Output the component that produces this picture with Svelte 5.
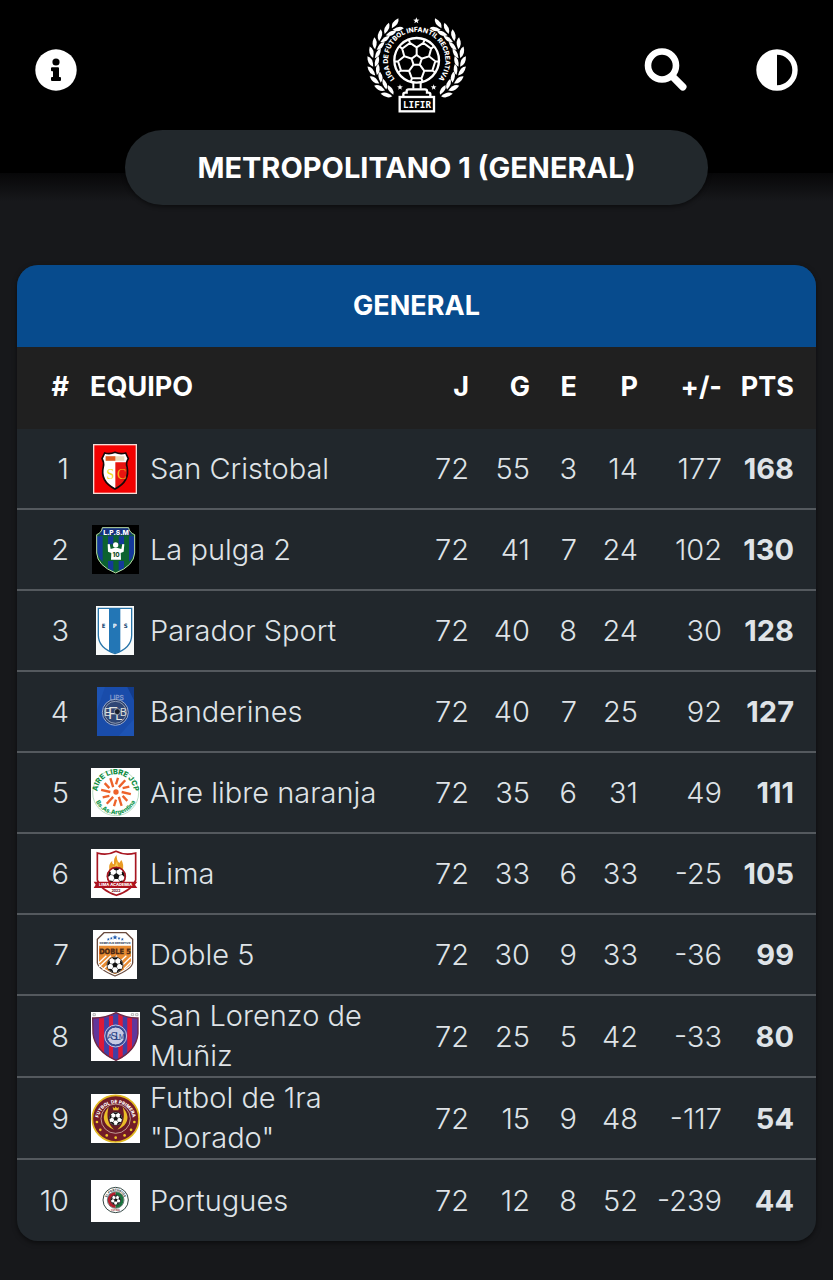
<script>
  const teams = [
    { id: 'cristobal', name: 'San Cristobal', w: 44, h: 50, s: [72, 55, 3, 14, 177, 168] },
    { id: 'pulga', name: 'La pulga 2', w: 47, h: 49, s: [72, 41, 7, 24, 102, 130] },
    { id: 'parador', name: 'Parador Sport', w: 38, h: 49, s: [72, 40, 8, 24, 30, 128] },
    { id: 'banderines', name: 'Banderines', w: 37, h: 49, s: [72, 40, 7, 25, 92, 127] },
    { id: 'aire', name: 'Aire libre naranja', w: 49, h: 49, s: [72, 35, 6, 31, 49, 111] },
    { id: 'lima', name: 'Lima', w: 49, h: 49, s: [72, 33, 6, 33, -25, 105] },
    { id: 'doble', name: 'Doble 5', w: 44, h: 49, s: [72, 30, 9, 33, -36, 99] },
    { id: 'lorenzo', name: 'San Lorenzo de Muñiz', w: 49, h: 49, s: [72, 25, 5, 42, -33, 80] },
    { id: 'dorado', name: 'Futbol de 1ra "Dorado"', w: 49, h: 49, s: [72, 15, 9, 48, -117, 54] },
    { id: 'portugues', name: 'Portugues', w: 49, h: 42, s: [72, 12, 8, 52, -239, 44] }
  ];

  const polar = (cx, cy, r, deg) => {
    const a = (deg * Math.PI) / 180;
    return `${(cx + r * Math.cos(a)).toFixed(1)},${(cy + r * Math.sin(a)).toFixed(1)}`;
  };
  const five = [0, 1, 2, 3, 4];
  const star = (cx, cy, r) =>
    Array.from({ length: 10 }, (_, i) => polar(cx, cy, i % 2 ? r * 0.42 : r, -90 + i * 36)).join(' ');
  const pentagon = (cx, cy, r) => five.map((i) => polar(cx, cy, r, -90 + i * 72)).join(' ');
  const patch = (cx, cy, r, a) =>
    [polar(cx, cy, r, a - 22), polar(cx, cy, r * 0.78, a - 18), polar(cx, cy, r * 0.66, a), polar(cx, cy, r * 0.78, a + 18), polar(cx, cy, r, a + 22)].join(' ');

  // Seams of the trophy ball: each spoke ends in a fork that reaches the rim.
  const seams = five
    .map((i) => {
      const a = -90 + i * 72;
      const p = (r, d) => polar(200, 181, r, a + d);
      return `M${p(15, 0)} L${p(39, 0)} L${p(56, 21)} L${p(56, 51)} L${p(39, 72)} M${p(56, 21)} L${p(66, 21)} M${p(56, 51)} L${p(66, 51)}`;
    })
    .join(' ');

  const leaves = Array.from({ length: 10 }, (_, i) => {
    const a = 126 + i * 12.4;
    const rad = (a * Math.PI) / 180;
    return {
      x: 200 + 129 * Math.cos(rad),
      y: 186 + 121 * Math.sin(rad),
      a: a + 92
    };
  });
  const rays = Array.from({ length: 12 }, (_, i) => i * 30);
</script>

{#snippet ball(cx, cy, r)}
  <circle {cx} {cy} {r} fill="#fff" stroke="#111" stroke-width="2" />
  <polygon points={pentagon(cx, cy, r * 0.36)} fill="#111" />
  {#each five as i}
    <polygon points={patch(cx, cy, r, -90 + i * 72)} fill="#111" />
    <path d={`M${polar(cx, cy, r * 0.3, -90 + i * 72)} L${polar(cx, cy, r * 0.7, -90 + i * 72)}`} stroke="#111" stroke-width="1.5" />
  {/each}
{/snippet}

{#snippet crest(t)}
  <svg class="crest" width={t.w} height={t.h} viewBox={`0 0 ${t.w * 3} ${t.h * 3}`} aria-hidden="true">
    {#if t.id === 'cristobal'}
      <rect width="132" height="150" fill="#f6dcd6" />
      <rect x="4" y="4" width="124" height="142" fill="#f40000" />
      <path d="M35 27 Q50 32 66 25 Q82 32 98 27 L106 44 Q98 55 102 68 Q112 112 66 135 Q20 112 31 68 Q34 55 27 44Z" fill="#fff" />
      <path d="M67 26 V134 Q112 112 101 68 V55 H67Z" fill="#e81410" />
      <path d="M38 37 H94 V50 H38Z" fill="#e9d9b8" />
      <path d="M38 37 H67 V50 H38Z" fill="#e0571f" />
      <path d="M35 27 Q50 32 66 25 Q82 32 98 27 L106 44 Q98 55 102 68 Q112 112 66 135 Q20 112 31 68 Q34 55 27 44Z" fill="none" stroke="#180808" stroke-width="5" />
      <text x="52" y="105" font-size="42" class="serif" fill="#f2dc22">S</text>
      <text x="86" y="105" font-size="42" class="serif" fill="#f6b51c">C</text>
    {:else if t.id === 'pulga'}
      <rect width="141" height="147" fill="#000" />
      <path d="M31 8 H110 Q112 23 128 29 V84 Q126 122 71 144 Q16 122 14 84 V29 Q29 23 31 8Z" fill="#0c6230" />
      <path d="M15 34 H32 V110 Q15 96 15 70Z M48 34 H64 V58 H48Z M80 34 H96 V58 H80Z M111 34 H127 V78 Q125 98 111 110Z M48 108 H64 V139 L48 130Z M80 108 H96 V130 L80 138Z" fill="#14389a" />
      <path d="M31 8 H110 Q112 23 124 31 H18 Q29 23 31 8Z" fill="#14307e" />
      <path d="M31 8 H110 Q112 23 128 29 V84 Q126 122 71 144 Q16 122 14 84 V29 Q29 23 31 8Z" fill="none" stroke="#b9dca8" stroke-width="3" />
      <text x="72" y="29" font-size="20" class="bold" fill="#fff">L.P.S.M</text>
      <circle cx="71" cy="60" r="8" fill="#fff" />
      <path d="M47 58 L53 57 L56 72 L66 69 H77 L88 72 L91 57 L97 58 L95 80 L86 84 L87 104 H57 L58 84 L48 80Z" fill="#fff" />
      <text x="72" y="95" font-size="19" class="bold" fill="#174e28">10</text>
    {:else if t.id === 'parador'}
      <rect width="114" height="147" fill="#f8fafa" />
      <path d="M7 7 H107 V88 Q107 126 57 143 Q7 126 7 88Z" fill="#fff" stroke="#2875aa" stroke-width="4" />
      <path d="M39 7 H73 V137 L57 142 L39 136Z" fill="#2376b5" />
      <text x="23" y="65" font-size="18" class="condensed" fill="#184a74">E</text>
      <text x="56" y="65" font-size="18" class="condensed" fill="#fff">P</text>
      <text x="89" y="65" font-size="18" class="condensed" fill="#184a74">S</text>
    {:else if t.id === 'banderines'}
      <rect width="111" height="147" fill="#194caa" />
      <path d="M0 0 H24 L0 70Z M65 147 L111 96 V147Z" fill="#1d53b3" />
      <path d="M91 0 H111 V40Z" fill="#123c8c" />
      <text x="59" y="38" font-size="20" fill="none" stroke="#8198cb" stroke-width="1.5">LIPS</text>
      <circle cx="55" cy="76" r="39" fill="#293e69" stroke="#9aabcf" stroke-width="3" />
      <circle cx="55" cy="76" r="33" fill="#2f4674" stroke="#bec5d1" stroke-width="2" />
      <g class="condensed" fill="#e0e2df">
        <text x="32" y="87" font-size="30">E</text>
        <text x="48" y="95" font-size="48">F</text>
        <text x="66" y="100" font-size="40">L</text>
        <text x="79" y="87" font-size="30">B</text>
      </g>
      <circle cx="61" cy="74" r="9" fill="#1b1e29" stroke="#bec5d1" stroke-width="2" />
    {:else if t.id === 'aire'}
      <rect width="147" height="147" fill="#fff" />
      <circle cx="74" cy="74" r="69" fill="none" stroke="#9acda7" stroke-width="2" />
      <defs>
        <path id="aire-top" d="M20 84 A55 55 0 1 1 128 84" />
        <path id="aire-bottom" d="M9 84 A66 66 0 0 0 139 84" />
      </defs>
      <text font-size="22" class="bold" fill="#108d43"><textPath href="#aire-top" startOffset="50%">AIRE LIBRE JCP</textPath></text>
      <text font-size="18" class="bold" fill="#159950"><textPath href="#aire-bottom" startOffset="50%">Bs.As.Argentina</textPath></text>
      {#each rays as a, i}
        <path d={`M${polar(75, 72, i % 2 ? 23 : 17, a)} L${polar(75, 72, i % 2 ? 43 : 45, a + 8)}`} stroke="#ed622b" stroke-width="7" />
      {/each}
      <circle cx="75" cy="72" r="8" fill="#ed622b" />
    {:else if t.id === 'lima'}
      <rect width="147" height="147" fill="#fff" />
      <path d="M19 12 Q48 21 75 7 Q102 21 134 12 V93 Q126 122 76 139 Q27 122 19 93Z" fill="#fff" stroke="#a81621" stroke-width="5" />
      <path d="M55 65 Q52 43 64 35 Q62 45 69 46 Q67 27 77 18 Q76 33 85 42 L91 33 Q101 47 94 69Z" fill="#e99b24" />
      <path d="M64 65 Q60 50 70 53 L79 34 Q78 50 87 63Z" fill="#f8ce4d" />
      {@render ball(76, 82, 27)}
      <circle cx="76" cy="82" r="27" fill="none" stroke="#a81621" stroke-width="5" />
      <path d="M8 98 H139 L132 107 L139 117 H8 L14 107Z" fill="#ad121e" />
      <text x="74" y="112" font-size="12" class="bold" fill="#fff">LIMA ACADEMIA</text>
      <text x="75" y="128" font-size="10" class="bold" fill="#79212a">2022</text>
    {:else if t.id === 'doble'}
      <rect width="132" height="147" fill="#fff" />
      <path d="M33 8 H99 L119 28 V99 Q116 117 66 138 Q16 117 13 99 V28Z" fill="#fff" stroke="#694a3e" stroke-width="4" />
      <path d="M18 47 H114 V100 Q110 113 66 133 Q22 113 18 100Z" fill="#e78b32" />
      <path d="M18 98 L40 77 M18 111 L54 77 M29 119 L72 77 M78 98 L100 77 M86 108 L114 81 M93 117 L114 96" stroke="#fff" stroke-width="4" />
      {#each [[46, 28], [55, 25], [66, 22], [78, 25], [88, 28]] as p, i}
        <polygon points={star(p[0], p[1], i === 2 ? 8 : 5)} fill="#225caf" />
      {/each}
      <text x="66" y="43" font-size="8" class="bold" fill="#394761">COMPLEJO DEPORTIVO</text>
      <text x="66" y="71" font-size="22" class="condensed" fill="#4b2815" stroke="#4b2815" stroke-width="1">DOBLE 5</text>
      {@render ball(66, 105, 24)}
    {:else if t.id === 'lorenzo'}
      <rect width="147" height="147" fill="#fff" />
      <path d="M5 18 Q43 19 75 2 Q107 19 141 18 V65 Q136 117 75 145 Q12 117 6 65Z" fill="#61369b" />
      <path d="M24 19 H39 V124 L24 110Z M54 12 H66 V141 L54 135Z M82 7 L95 13 V137 L82 143Z M109 17 H123 V111 L109 124Z" fill="#db1a38" />
      <path d="M40 19 H53 V134 L40 125Z M67 7 H81 V143 L67 141Z M96 14 H108 V126 L96 135Z" fill="#4040a4" />
      <path d="M5 18 Q43 19 75 2 Q107 19 141 18 V65 Q136 117 75 145 Q12 117 6 65Z" fill="none" stroke="#6d2844" stroke-width="4" />
      <circle cx="74" cy="72" r="33" fill="#3c519a" stroke="#c1c5e4" stroke-width="3" />
      <circle cx="74" cy="72" r="27" fill="#c6cae3" stroke="#2e3f89" stroke-width="3" />
      <g class="condensed" fill="#243d83">
        <text x="57" y="81" font-size="22">A</text>
        <text x="69" y="84" font-size="32">S</text>
        <text x="81" y="84" font-size="30">L</text>
        <text x="92" y="80" font-size="20">M</text>
      </g>
      <path d="M6 5 H13 V11 H6Z M121 5 H128 V11 H121Z M134 5 H141 V11 H134Z" fill="none" stroke="#949494" stroke-width="2" />
    {:else if t.id === 'dorado'}
      <rect width="147" height="147" fill="#fff" />
      <circle cx="74" cy="74" r="70" fill="#731c27" stroke="#e1b91f" stroke-width="5" />
      <circle cx="74" cy="74" r="44" fill="#681b27" stroke="#eddbc7" stroke-width="2" />
      <defs><path id="dorado-arc" d="M22 80 A52 52 0 1 1 126 80" /></defs>
      <text font-size="14" class="bold" fill="#fff"><textPath href="#dorado-arc" startOffset="50%">FUTBOL DE PRIMERA</textPath></text>
      <path d="M53 39 Q27 69 48 94 Q57 103 69 107 Q41 82 53 39Z M95 39 Q121 69 100 94 Q91 103 79 107 Q107 82 95 39Z" fill="#e9bc28" />
      <path d="M67 49 L65 39 L71 43 L74 37 L78 43 L84 39 L82 49Z" fill="#e9bc28" />
      {@render ball(74, 74, 20)}
      {#each [10, 36, 62, 90, 118, 144, 170] as a}
        <circle cx={74 + 57 * Math.cos((a * Math.PI) / 180)} cy={74 + 57 * Math.sin((a * Math.PI) / 180)} r="4" fill="#edc728" />
      {/each}
    {:else}
      <rect width="147" height="126" fill="#fff" />
      <circle cx="74" cy="60" r="38" fill="#fff" stroke="#344844" stroke-width="3" />
      <path d="M74 36 A24 24 0 0 0 74 84Z" fill="#b51e2c" />
      <path d="M74 36 A24 24 0 0 1 74 84Z" fill="#19743d" />
      <circle cx="74" cy="60" r="25" fill="none" stroke="#354b44" stroke-width="2" />
      <defs><path id="port-arc" d="M47 60 A27 27 0 0 1 101 60" /></defs>
      <text font-size="9" class="bold" fill="#35433f"><textPath href="#port-arc" startOffset="50%">EL PORTUGUES</textPath></text>
      <text x="74" y="94" font-size="7" class="bold" fill="#9e3942">FUTBOL</text>
      {@render ball(74, 60, 15)}
    {/if}
  </svg>
{/snippet}

<div class="page">
  <header>
    <nav>
      <div class="side">
        <button aria-label="Información">
          <svg width="42" height="42" viewBox="0 0 42 42">
            <circle cx="21" cy="21" r="20.7" fill="#fff" />
            <circle cx="21" cy="13" r="3.6" fill="#000" />
            <path d="M17 18.3 H23 Q24 18.3 24 19.3 V28 H25 Q26 28 26 29 V31 Q26 32 25 32 H17 Q16 32 16 31 V29 Q16 28 17 28 H18 V22.3 H17 Q16 22.3 16 21.3 V19.3 Q16 18.3 17 18.3Z" fill="#000" />
          </svg>
        </button>
      </div>
      <a href="#inicio" aria-label="LIFIR">
        <svg class="logo" width="133" height="139" viewBox="0 0 399 417" fill="none">
          <defs><path id="liga-arc" d="M138 241 A86 86 0 1 1 262 241" /></defs>
          {#each [false, true] as flip}
            <g transform={flip ? 'translate(400 0) scale(-1 1)' : undefined}>
              {#each leaves as l}
                <g transform={`translate(${l.x} ${l.y}) rotate(${l.a})`} fill="#fff">
                  <path d="M-5 -2 Q2 -20 27 -18 Q22 -1 -5 -2Z" />
                  <path d="M-5 3 Q2 20 26 16 Q20 1 -5 3Z" />
                </g>
              {/each}
            </g>
          {/each}
          <circle cx="200" cy="181" r="67" stroke="#fff" stroke-width="7" />
          <path d={seams} stroke="#fff" stroke-width="6" />
          <polygon points={pentagon(200, 181, 16)} stroke="#fff" stroke-width="6" />
          <text font-size="20" class="bold" fill="#fff"><textPath href="#liga-arc" startOffset="50%">LIGA DE FÚTBOL INFANTIL RECREATIVA</textPath></text>
          <polygon points={star(199, 62, 10)} fill="#fff" />
          <polygon points={star(150, 262, 9)} fill="#fff" />
          <polygon points={star(251, 262, 9)} fill="#fff" />
          <path d="M190 244 V266 M212 244 V266" stroke="#fff" stroke-width="6" />
          <path d="M160 290 V283 Q160 278 166 278 H170 V273 Q170 268 176 268 H225 Q231 268 231 273 V278 H235 Q241 278 241 283 V290" fill="#000" stroke="#fff" stroke-width="7" />
          <rect x="149" y="291" width="103" height="43" fill="#000" stroke="#fff" stroke-width="7" />
          <text x="201" y="323" font-size="28" class="mono" fill="#fff">LIFIR</text>
        </svg>
      </a>
      <div class="side end">
        <button aria-label="Buscar">
          <svg width="43" height="43" viewBox="0 0 43 43" fill="none" stroke="#fff">
            <circle cx="18" cy="17.5" r="14" stroke-width="6.6" />
            <path d="M27.5 27.5 L38.8 38.8" stroke-width="5" />
            <path d="M30 30 L38.8 38.8" stroke-width="7.4" stroke-linecap="round" />
          </svg>
        </button>
        <button aria-label="Contraste">
          <svg width="42" height="42" viewBox="0 0 42 42">
            <circle cx="21" cy="21" r="18" fill="none" stroke="#fff" stroke-width="5.4" />
            <path d="M21 3 A18 18 0 0 0 21 39Z" fill="#fff" />
          </svg>
        </button>
      </div>
    </nav>
  </header>

  <h1>METROPOLITANO 1 (GENERAL)</h1>

  <main>
    <table>
      <caption>GENERAL</caption>
      <colgroup>
        <col class="c-pos" /><col /><col class="c-j" /><col class="c-g" /><col class="c-e" /><col class="c-g" /><col class="c-dif" /><col class="c-dif" />
      </colgroup>
      <thead>
        <tr>
          <th scope="col">#</th>
          <th scope="col" class="team">EQUIPO</th>
          {#each ['J', 'G', 'E', 'P', '+/-', 'PTS'] as h}
            <th scope="col">{h}</th>
          {/each}
        </tr>
      </thead>
      <tbody>
        {#each teams as t, i}
          <tr>
            <td>{i + 1}</td>
            <td class="team">
              <div class="team-row">
                <span class="badge">{@render crest(t)}</span>
                <span class="name">{t.name}</span>
              </div>
            </td>
            {#each t.s as v}
              <td>{v}</td>
            {/each}
          </tr>
        {/each}
      </tbody>
    </table>
  </main>
</div>

<style>
  :global(body) {
    margin: 0;
    background: #17181b;
  }
  .page {
    font-family: Inter, 'Open Sans', sans-serif;
    color: #fff;
    padding-bottom: 37px;
    background: linear-gradient(#070708 173px, #17181b 201px);
  }
  header {
    height: 173px;
    background: #000;
  }
  nav {
    display: grid;
    grid-template-columns: 1fr auto 1fr;
    align-items: center;
    padding: 0 35px;
  }
  .side {
    display: flex;
    align-items: center;
    gap: 69px;
  }
  .end {
    justify-content: flex-end;
  }
  button {
    border: 0;
    padding: 0;
    background: none;
    cursor: pointer;
  }
  svg {
    display: block;
  }
  svg text {
    font-family: Inter, sans-serif;
    text-anchor: middle;
  }
  svg .bold {
    font-weight: 800;
  }
  svg .serif {
    font-family: 'Liberation Serif', serif;
  }
  svg .condensed,
  svg .condensed text {
    font-family: 'DejaVu Sans Condensed', 'DejaVu Sans', sans-serif;
    font-weight: 700;
  }
  svg g.condensed text {
    font-family: 'Liberation Sans Narrow', 'Liberation Sans', sans-serif;
    font-weight: 400;
  }
  svg .mono {
    font-family: 'DejaVu Sans Mono', monospace;
    font-weight: 700;
  }
  h1 {
    position: relative;
    box-sizing: border-box;
    width: 70%;
    margin: -43px auto 60px;
    padding: 0 20px;
    border-radius: 38px;
    background: #22282c;
    box-shadow: 0 2px 4px rgba(0, 0, 0, 0.45);
    font-size: 29px;
    font-weight: 700;
    line-height: 75px;
    text-align: center;
  }
  main {
    margin: 0 17px;
    overflow: hidden;
    border-radius: 21px;
    background: #21272c;
    box-shadow: 0 2px 5px rgba(0, 0, 0, 0.5);
  }
  table {
    width: 100%;
    table-layout: fixed;
    border-spacing: 0;
  }
  caption {
    background: #074b8d;
    font-size: 27px;
    font-weight: 700;
    line-height: 82px;
  }
  .c-pos {
    width: 62px;
  }
  .c-j {
    width: 65px;
  }
  .c-g {
    width: 61px;
  }
  .c-e {
    width: 47px;
  }
  .c-dif {
    width: 84px;
  }
  th,
  td {
    box-sizing: border-box;
    padding: 0 10px 0 0;
    text-align: right;
    white-space: nowrap;
  }
  th {
    height: 82px;
    padding-bottom: 3px;
    background: #202020;
    font-size: 27px;
    font-weight: 700;
  }
  td {
    height: 81px;
    border-bottom: 2px solid #54595e;
    color: #dfe3e7;
    font-size: 29px;
    font-weight: 300;
  }
  tr:last-child td {
    border-bottom: 0;
  }
  th:last-child,
  td:last-child {
    padding-right: 22px;
  }
  td:last-child {
    font-weight: 700;
  }
  .team {
    padding-left: 11px;
    text-align: left;
  }
  .team-row {
    display: flex;
    align-items: center;
    gap: 10px;
  }
  .badge {
    display: flex;
    flex: none;
    justify-content: center;
    width: 50px;
  }
  .name {
    font-size: 29px;
    line-height: 40px;
    white-space: normal;
  }
</style>
